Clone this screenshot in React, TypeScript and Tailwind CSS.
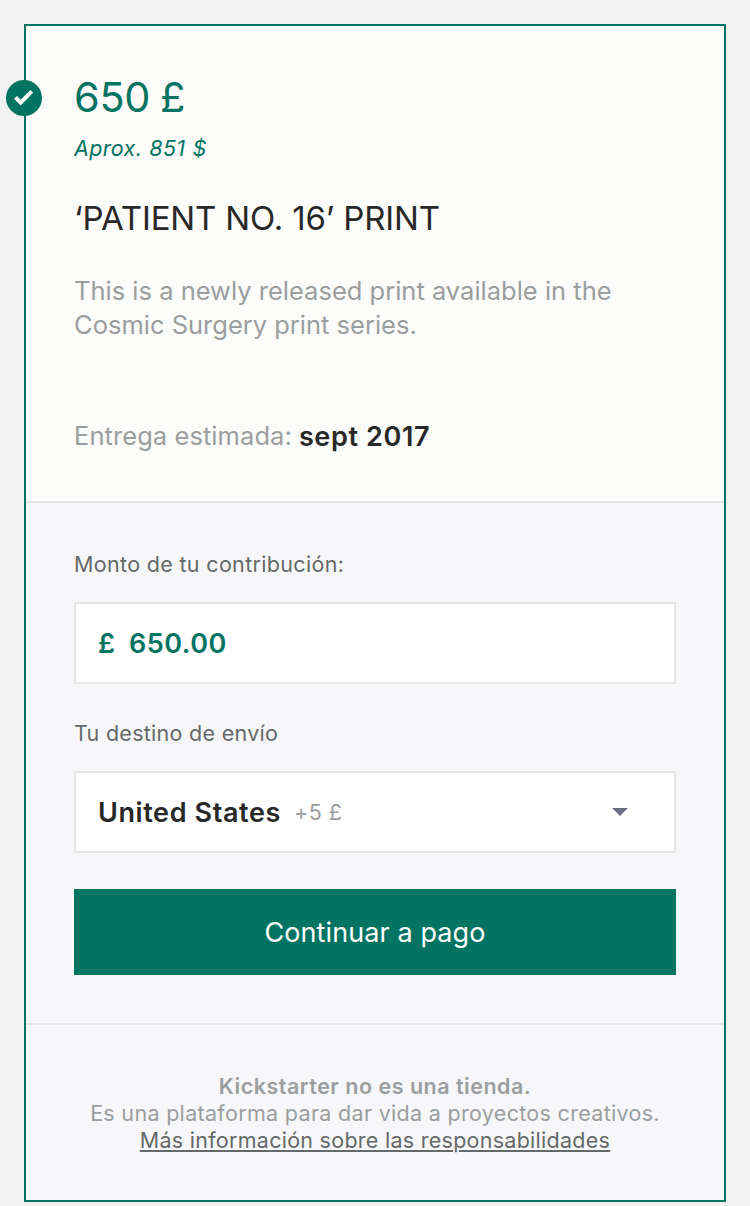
import React from "react";

function CheckBadge() {
  return (
    <span className="absolute -left-5 top-[54px] flex size-9 items-center justify-center rounded-full bg-[#037362]">
      <svg width="36" height="36" viewBox="0 0 36 36" fill="none" aria-hidden="true">
        <path d="M9.5 17.3 L14.7 22.6 L25.7 11.4" stroke="#fff" strokeWidth="4" />
      </svg>
    </span>
  );
}

function RewardSummary() {
  return (
    <section className="relative border-b-2 border-[#e6e6e6] bg-[#fcfcfa] px-12 pb-12 pt-12">
      <CheckBadge />
      <h2 className="text-[41.5px] leading-[46px] tracking-[-0.3px] text-[#037362] [word-spacing:-1.5px]">650 £</h2>
      <p className="mt-3.5 text-[21.5px] italic leading-7 tracking-[0.35px] text-[#037362] [word-spacing:0.7px]">Aprox. 851 $</p>
      <h3 className="mt-9 text-[33px] leading-10 tracking-[-0.15px] text-[#282828]">‘PATIENT NO. 16’ PRINT</h3>
      <p className="mt-9 whitespace-nowrap text-[25.5px] leading-[34px] text-[#9b9e9e]">
        This is a newly released print available in the
        <br />
        Cosmic Surgery print series.
      </p>
      <p className="mt-[77px] flex gap-[7px] whitespace-nowrap text-[25.5px] leading-[34px] text-[#9b9e9e]">
        <span className="tracking-[0.07px]">Entrega estimada:</span>
        <strong className="-mb-px pt-px text-[27px] font-semibold tracking-[0.65px] text-[#282828]">sept 2017</strong>
      </p>
    </section>
  );
}

function PledgeForm() {
  return (
    <section className="border-b-2 border-[#e6e6e8] px-12 pb-12 pt-[47px]">
      <div className="text-[21.5px] leading-7 tracking-[0.33px] text-[#656969]">Monto de tu contribución:</div>
      <div className="mt-6 flex h-[82px] items-center border-2 border-[#e6e6e6] bg-white px-[22px] pt-0.5 text-[27px] font-semibold text-[#037362]">
        <span className="w-[31px]">£</span>
        <span className="tracking-[0.5px]">650.00</span>
      </div>
      <div className="mt-[35px] text-[21.5px] leading-7 tracking-[0.28px] text-[#656969]">Tu destino de envío</div>
      <div className="mt-6 flex h-[82px] items-center border-2 border-[#e6e6e6] bg-white pl-[22px] pr-[46px]">
        <span className="pt-0.5 text-[27px] font-semibold tracking-[0.6px] text-[#282828]">United States</span>
        <span className="ml-[13px] text-[21.5px] tracking-[0.5px] text-[#9b9e9e]">+5 £</span>
        <svg className="ml-auto" width="16" height="8" viewBox="0 0 16 8" aria-hidden="true">
          <path d="M0 0H16L8 8Z" fill="#676f80" />
        </svg>
      </div>
      <button className="mt-9 block h-[86px] w-full bg-[#037362] pt-px text-[27px] leading-[86px] tracking-[0.1px] text-white">
        Continuar a pago
      </button>
    </section>
  );
}

function Disclaimer() {
  return (
    <footer className="whitespace-nowrap pb-[46px] pt-12 text-center text-[21.5px] leading-[27px] text-[#9b9e9e]">
      <p className="font-semibold tracking-[0.5px]">Kickstarter no es una tienda.</p>
      <p className="tracking-[0.31px]">Es una plataforma para dar vida a proyectos creativos.</p>
      <p className="tracking-[0.27px]">
        <a className="text-[#656969] underline decoration-2 underline-offset-[2px]">
          Más información sobre las responsabilidades
        </a>
      </p>
    </footer>
  );
}

export default function App() {
  return (
    <main className="h-[1206px] bg-[#f1f1f1] px-6 pt-6 font-['Inter',sans-serif]">
      <article className="border-2 border-[#037362] bg-[#f7f7fa]">
        <RewardSummary />
        <PledgeForm />
        <Disclaimer />
      </article>
    </main>
  );
}
